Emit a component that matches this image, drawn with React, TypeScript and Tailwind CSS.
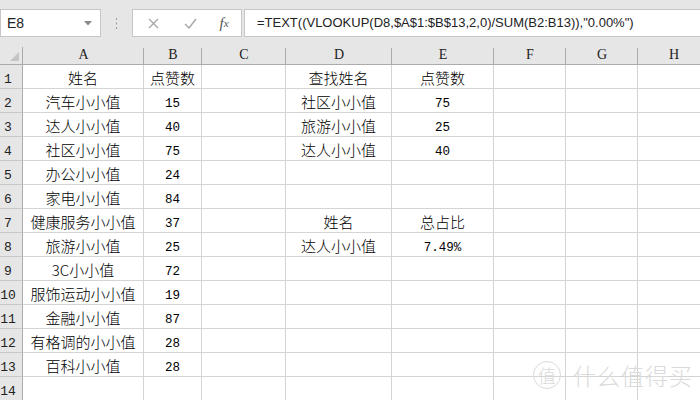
import React from "react";

const COLS = [
  { key: "A", w: "w-[121px]" },
  { key: "B", w: "w-[58px]" },
  { key: "C", w: "w-[84px]" },
  { key: "D", w: "w-[106px]" },
  { key: "E", w: "w-[102px]" },
  { key: "F", w: "w-[72px]" },
  { key: "G", w: "w-[72px]" },
  { key: "H", w: "w-[72px]" },
];

type Cell = string | number | undefined;

const ROWS: Cell[][] = [
  ["姓名", "点赞数", "", "查找姓名", "点赞数"],
  ["汽车小小值", 15, "", "社区小小值", 75],
  ["达人小小值", 40, "", "旅游小小值", 25],
  ["社区小小值", 75, "", "达人小小值", 40],
  ["办公小小值", 24],
  ["家电小小值", 84],
  ["健康服务小小值", 37, "", "姓名", "总占比"],
  ["旅游小小值", 25, "", "达人小小值", "7.49%"],
  ["3C小小值", 72],
  ["服饰运动小小值", 19],
  ["金融小小值", 87],
  ["有格调的小小值", 28],
  ["百科小小值", 28],
  [],
];

function CellText({ value }: { value: Cell }) {
  if (value === undefined || value === "") return null;
  const mono = typeof value === "number" || value === "7.49%";
  if (mono) {
    return (
      <span className="pb-[2px] font-['Liberation_Mono',monospace] text-[12.5px] leading-none text-black">
        {value}
      </span>
    );
  }
  return (
    <span className="pb-[3px] font-['Noto_Sans_CJK_SC',sans-serif] text-[15px] font-light leading-none text-black">
      {value}
    </span>
  );
}

function FormulaBar() {
  return (
    <div className="flex h-[47px] items-start bg-[#e6e6e6] pt-[9px]">
      <div className="flex h-[28px] w-[101px] shrink-0 items-center justify-between border border-[#c6c6c6] bg-white pl-[6px] pr-[8px]">
        <span className="font-['Liberation_Sans',sans-serif] text-[14px] text-[#222]">E8</span>
        <svg width="8" height="5" viewBox="0 0 8 5">
          <path d="M0 0h8L4 4.5z" fill="#8a8a8a" />
        </svg>
      </div>
      <div className="flex h-[28px] w-[31px] shrink-0 items-center justify-center">
        <svg width="3" height="11" viewBox="0 0 3 11">
          <rect x="1" y="0" width="1" height="2" fill="#9a9a9a" />
          <rect x="1" y="4.5" width="1" height="2" fill="#9a9a9a" />
          <rect x="1" y="9" width="1" height="2" fill="#9a9a9a" />
        </svg>
      </div>
      <div className="flex h-[28px] w-[110px] shrink-0 items-center border border-[#c6c6c6] bg-white">
        <div className="flex w-[38px] justify-center pl-[2px]">
          <svg width="11" height="11" viewBox="0 0 11 11">
            <path d="M1 1l9 9M10 1l-9 9" stroke="#a6a6a6" strokeWidth="1.3" />
          </svg>
        </div>
        <div className="flex w-[38px] justify-center">
          <svg width="13" height="11" viewBox="0 0 13 11">
            <path d="M1 6l4 4 7-9" stroke="#a6a6a6" strokeWidth="1.4" fill="none" />
          </svg>
        </div>
        <div className="flex w-[30px] justify-center font-['Liberation_Serif',serif] text-[15px] italic text-[#555]">
          <span>f</span>
          <span className="text-[11px] leading-[22px]">x</span>
        </div>
      </div>
      <div className="ml-[2px] flex h-[28px] flex-1 items-center border border-r-0 border-[#c6c6c6] bg-white pl-[12px]">
        <span className="whitespace-nowrap font-['Liberation_Sans',sans-serif] text-[13px] text-[#222]">
          =TEXT((VLOOKUP(D8,$A$1:$B$13,2,0)/SUM(B2:B13)),"0.00%")
        </span>
      </div>
    </div>
  );
}

function Sheet() {
  return (
    <div className="flex flex-col">
      <div className="flex h-[18px] bg-[#e6e6e6]">
        <div className="relative h-[18px] w-[23px] shrink-0 border-b border-r border-[#ababab]">
          <svg className="absolute bottom-[3px] right-[3px]" width="9" height="9" viewBox="0 0 9 9">
            <path d="M9 0v9H0z" fill="#c4c4c4" />
          </svg>
        </div>
        {COLS.map((c) => (
          <div
            key={c.key}
            className={`${c.w} relative flex h-[18px] shrink-0 items-end justify-center border-b border-[#ababab] pb-[2px]`}
          >
            <span className="font-['Liberation_Serif',serif] text-[14px] leading-none text-[#222]">{c.key}</span>
            <div className="absolute right-0 top-[1px] h-[16px] w-px bg-[#ababab]" />
          </div>
        ))}
      </div>
      {ROWS.map((row, i) => (
        <div key={i} className="flex h-[24px]">
          <div className="flex h-[24px] w-[23px] shrink-0 items-end border-b border-r border-b-[#c8c8c8] border-r-[#ababab] bg-[#e6e6e6] pb-[2px]">
            <span className="w-[16px] text-center font-['Liberation_Mono',monospace] text-[13px] leading-none text-[#222]">
              {i + 1}
            </span>
          </div>
          {COLS.map((c, j) => (
            <div
              key={c.key}
              className={`${c.w} flex h-[24px] shrink-0 items-end justify-center whitespace-nowrap border-b border-r border-[#d4d4d4]`}
            >
              <CellText value={row[j]} />
            </div>
          ))}
        </div>
      ))}
    </div>
  );
}

function Watermark() {
  return (
    <div className="pointer-events-none absolute left-[533px] top-[361px] flex items-center gap-[12px] text-[#dadada]">
      <div className="flex h-[28px] w-[28px] items-center justify-center rounded-full border border-[#dadada] font-['Noto_Sans_CJK_SC',sans-serif] text-[18px] font-light leading-none">
        值
      </div>
      <span className="font-['Noto_Sans_CJK_SC',sans-serif] text-[23px] font-light leading-none tracking-[1px]">
        什么值得买
      </span>
    </div>
  );
}

export default function App() {
  return (
    <div className="relative h-[400px] w-[700px] overflow-hidden bg-white">
      <FormulaBar />
      <Sheet />
      <Watermark />
    </div>
  );
}
